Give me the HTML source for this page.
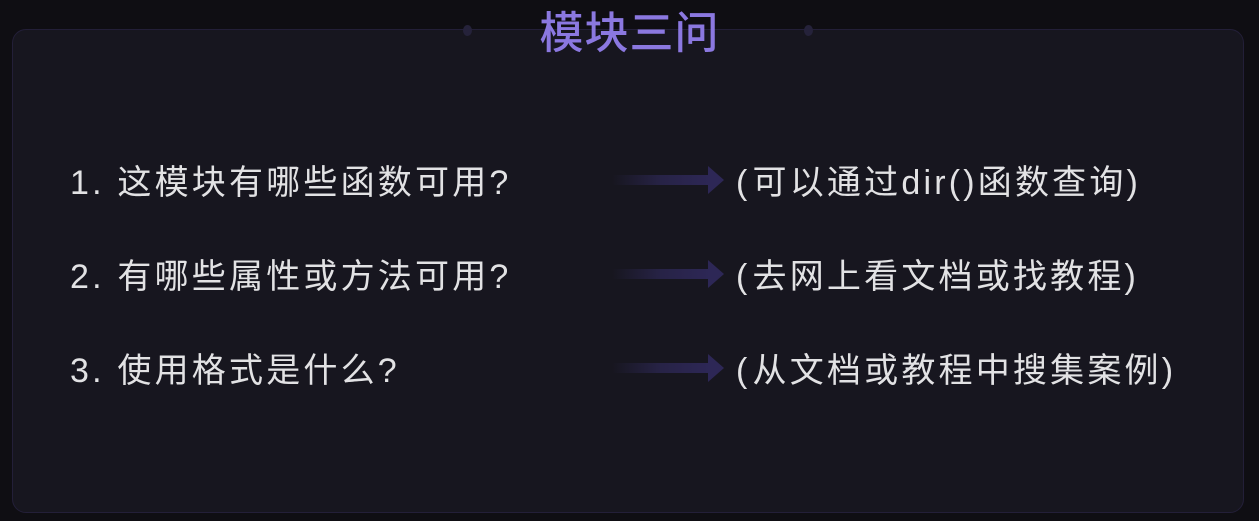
<!DOCTYPE html>
<html><head><meta charset="utf-8"><style>
body{margin:0;width:1259px;height:521px;background:#0f0e13;position:relative;overflow:hidden;font-family:"Liberation Sans","Noto Sans CJK SC",sans-serif}
.card{position:absolute;left:12px;top:29px;width:1232px;height:484px;background:#17161f;border:1px solid #231f38;border-radius:14px;box-sizing:border-box}
.title{position:absolute;left:0;width:1259px;top:7px;text-align:center;color:#8b78e0;font-size:44px;font-weight:500;line-height:54px;letter-spacing:1px}
.dot{position:absolute;top:25px;width:9px;height:11px;border-radius:50%;background:#25223a}
.t{position:absolute;color:#e2e2e4;font-size:34px;line-height:44px;white-space:nowrap;letter-spacing:3.2px}
.p{margin:0 4px}
.arr{position:absolute;left:612px;width:112px;height:30px}
</style></head><body>
<div class="card"></div>
<div class="dot" style="left:463px"></div><div class="dot" style="left:804px"></div>
<div class="title">模块三问</div>
<div class="t" style="left:70px;top:161px">1.&nbsp;这模块有哪些函数可用?</div>
<div class="t" style="left:70px;top:255px">2.&nbsp;有哪些属性或方法可用?</div>
<div class="t" style="left:70px;top:349px">3.&nbsp;使用格式是什么?</div>
<div class="t" style="left:736px;top:161px">(<span style="margin-left:2px"></span>可以通过dir()函数查询)</div>
<div class="t" style="left:736px;top:255px">(<span style="margin-left:2px"></span>去网上看文档或找教程)</div>
<div class="t" style="left:736px;top:349px">(<span style="margin-left:2px"></span>从文档或教程中搜集案例)</div>
<svg width="0" height="0"><defs><linearGradient id="g"><stop offset="0" stop-color="#2b2650" stop-opacity="0"/><stop offset="0.5" stop-color="#2b2650" stop-opacity="0.8"/><stop offset="1" stop-color="#2d2756"/></linearGradient></defs></svg>
<svg class="arr" style="top:165px" viewBox="0 0 112 30"><rect x="0" y="10" width="98" height="10" fill="url(#g)"/><path d="M96 1 L112 15 L96 29 Z" fill="#2d2756"/></svg>
<svg class="arr" style="top:259px" viewBox="0 0 112 30"><rect x="0" y="10" width="98" height="10" fill="url(#g)"/><path d="M96 1 L112 15 L96 29 Z" fill="#2d2756"/></svg>
<svg class="arr" style="top:353px" viewBox="0 0 112 30"><rect x="0" y="10" width="98" height="10" fill="url(#g)"/><path d="M96 1 L112 15 L96 29 Z" fill="#2d2756"/></svg>
</body></html>
